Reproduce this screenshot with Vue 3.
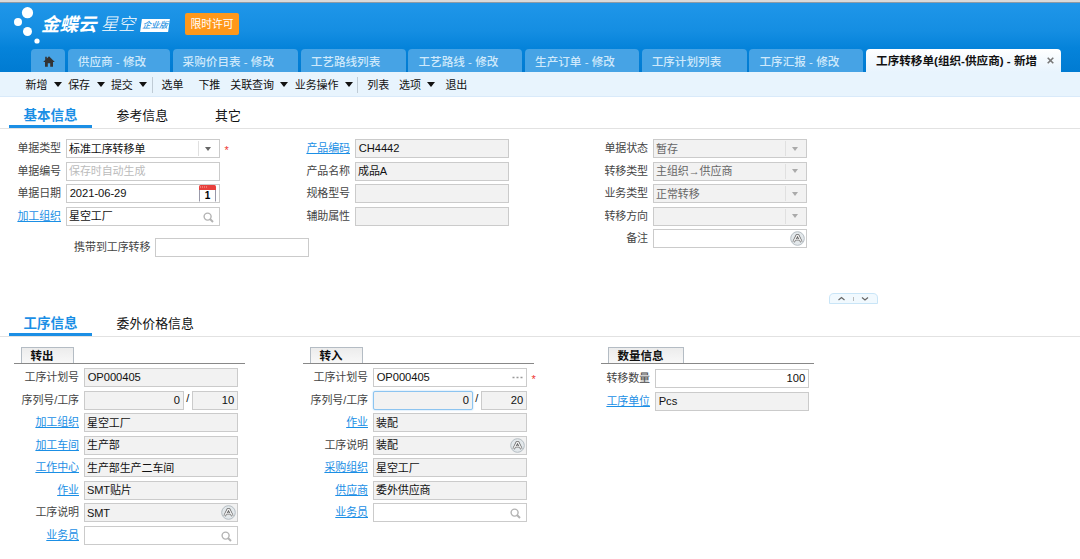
<!-- App.vue - Bill edit page: operation transfer (organization to supplier) -->
<script setup>
import { ref } from 'vue'

const windowTabs = [
  { title: '供应商 - 修改', size: 'w102' },
  { title: '采购价目表 - 修改', size: 'w125' },
  { title: '工艺路线列表', size: 'w105' },
  { title: '工艺路线 - 修改', size: 'w114' },
  { title: '生产订单 - 修改', size: 'w114' },
  { title: '工序计划列表', size: 'w105' },
  { title: '工序汇报 - 修改', size: 'w114' },
]

const tools = [
  { text: '新增', menu: true },
  { text: '保存', menu: true },
  { text: '提交', menu: true, end: true },
  { text: '选单', wide: true },
  { text: '下推' },
  { text: '关联查询', menu: true },
  { text: '业务操作', menu: true, end: true },
  { text: '列表' },
  { text: '选项', menu: true, wide: true },
  { text: '退出' },
]

const baseTabs = ['基本信息', '参考信息', '其它']
const detailTabs = ['工序信息', '委外价格信息']
const baseTab = ref(0)
const detailTab = ref(0)

// icon: drop | date | search | lang | more
const baseColumns = [
  {
    name: 'col-bill',
    fields: [
      { label: '单据类型', value: '标准工序转移单', icon: 'drop', required: true },
      { label: '单据编号', value: '保存时自动生成', hint: true },
      { label: '单据日期', value: '2021-06-29', latin: true, icon: 'date' },
      { label: '加工组织', value: '星空工厂', link: true, icon: 'search' },
    ],
  },
  {
    name: 'col-product',
    fields: [
      { label: '产品编码', value: 'CH4442', latin: true, link: true, locked: true },
      { label: '产品名称', value: '成品A', locked: true },
      { label: '规格型号', value: '', locked: true },
      { label: '辅助属性', value: '', locked: true },
    ],
  },
  {
    name: 'col-status',
    fields: [
      { label: '单据状态', value: '暂存', locked: true, dim: true, icon: 'drop' },
      { label: '转移类型', value: '主组织→供应商', locked: true, dim: true, icon: 'drop' },
      { label: '业务类型', value: '正常转移', locked: true, dim: true, icon: 'drop' },
      { label: '转移方向', value: '', locked: true, dim: true, icon: 'drop' },
      { label: '备注', value: '', icon: 'lang' },
    ],
  },
]

const groups = [
  {
    name: 'group-out',
    title: '转出',
    fields: [
      { label: '工序计划号', value: 'OP000405', latin: true, locked: true },
      { label: '序列号/工序', value: '0', second: '10', latin: true, locked: true },
      { label: '加工组织', value: '星空工厂', link: true, locked: true },
      { label: '加工车间', value: '生产部', link: true, locked: true },
      { label: '工作中心', value: '生产部生产二车间', link: true, locked: true },
      { label: '作业', value: 'SMT贴片', link: true, locked: true },
      { label: '工序说明', value: 'SMT', locked: true, icon: 'lang' },
      { label: '业务员', value: '', link: true, icon: 'search' },
    ],
  },
  {
    name: 'group-in',
    title: '转入',
    fields: [
      { label: '工序计划号', value: 'OP000405', latin: true, icon: 'more', required: true },
      { label: '序列号/工序', value: '0', second: '20', latin: true, locked: true, focus: true },
      { label: '作业', value: '装配', link: true, locked: true },
      { label: '工序说明', value: '装配', locked: true, icon: 'lang' },
      { label: '采购组织', value: '星空工厂', link: true, locked: true },
      { label: '供应商', value: '委外供应商', link: true, locked: true },
      { label: '业务员', value: '', link: true, icon: 'search' },
    ],
  },
  {
    name: 'group-qty',
    title: '数量信息',
    fields: [
      { label: '转移数量', value: '100', latin: true, right: true },
      { label: '工序单位', value: 'Pcs', latin: true, link: true, locked: true },
    ],
  },
]
</script>

<template>
  <div class="page">
    <div class="browser-edge"></div>

    <header class="header">
      <div class="brand">
        <svg class="dots" width="30" height="42" viewBox="0 0 30 42">
          <g fill="#fff">
            <circle cx="14.5" cy="9.7" r="5.6" />
            <circle cx="5" cy="19" r="4" />
            <circle cx="14.5" cy="28.5" r="4.5" />
            <circle cx="24" cy="38" r="2.6" />
          </g>
        </svg>
        <span class="brand-main">金蝶云</span>
        <span class="brand-sub">星空</span>
        <span class="edition"><span>企业版</span></span>
        <span class="license">限时许可</span>
      </div>

      <nav class="window-tabs">
        <div class="window-tab home">
          <svg width="12" height="11" viewBox="0 0 12 11">
            <path d="M6 0.2L11.8 6H10v4.8H7.2V7.2H4.8v3.6H2V6H0.2L2.2 4V0.8h1.6v1.6z" fill="#333" />
          </svg>
        </div>
        <div v-for="tab in windowTabs" :key="tab.title" class="window-tab" :class="tab.size">
          {{ tab.title }}
        </div>
        <div class="window-tab current">
          <span>工序转移单(组织-供应商) - 新增</span>
          <svg class="close" width="7" height="7" viewBox="0 0 7 7">
            <path d="M0.7 0.7l5.6 5.6M6.3 0.7L0.7 6.3" stroke="#777" stroke-width="1.6" />
          </svg>
        </div>
      </nav>
    </header>

    <div class="toolbar">
      <div
        v-for="tool in tools"
        :key="tool.text"
        class="tool"
        :class="{ menu: tool.menu, wide: tool.wide, end: tool.end }"
      >
        {{ tool.text }}<i v-if="tool.menu" class="caret"></i>
      </div>
    </div>

    <nav class="section-tabs">
      <div
        v-for="(tab, i) in baseTabs"
        :key="tab"
        class="section-tab"
        :class="{ active: baseTab === i }"
        @click="baseTab = i"
      >
        {{ tab }}
      </div>
    </nav>

    <section class="base-form">
      <div v-for="col in baseColumns" :key="col.name" class="column" :class="col.name">
        <div v-for="f in col.fields" :key="f.label" class="row">
          <span class="label" :class="{ link: f.link }">{{ f.label }}</span>
          <div class="field" :class="{ locked: f.locked, dim: f.dim, hint: f.hint, latin: f.latin }">
            <span class="value">{{ f.value }}</span>
            <span v-if="f.icon === 'drop'" class="drop"><i></i></span>
            <svg v-else-if="f.icon === 'date'" class="date" width="17" height="17" viewBox="0 0 17 17">
              <path d="M0.5 4v12.5M16.5 4v12.5" fill="none" stroke="#99a" />
              <path d="M0 5V1.5Q0 0 1.5 0h14Q17 0 17 1.5V5z" fill="#e8403c" />
              <path d="M1 2h8" stroke="#f9b0aa" stroke-dasharray="1 1" />
              <text x="8.5" y="14" text-anchor="middle" font-size="10" font-weight="700">1</text>
            </svg>
            <svg v-else-if="f.icon === 'search'" class="search" width="11" height="11" viewBox="0 0 11 11">
              <circle cx="4.6" cy="4.6" r="3.5" fill="none" stroke="#b3b3b3" stroke-width="1.4" />
              <path d="M7 7l3 3" stroke="#b3b3b3" stroke-width="1.9" />
            </svg>
            <svg v-else-if="f.icon === 'lang'" class="lang" width="15" height="15" viewBox="0 0 15 15">
              <circle cx="7.5" cy="7.5" r="6.8" fill="#e3e8eb" stroke="#b4bcc2" />
              <path d="M3.6 11L7 4.2h1L11.4 11M5.4 8.8h4.2" fill="none" stroke="#666" stroke-width="2.6" stroke-linejoin="round" />
              <path d="M3.6 10.8L7 4.4h1L11.4 10.8M5.4 8.8h4.2" fill="none" stroke="#f4f4f4" stroke-width="1.2" />
            </svg>
          </div>
          <span v-if="f.required" class="star">*</span>
        </div>
        <div v-if="col.name === 'col-bill'" class="row carry">
          <span class="label">携带到工序转移</span>
          <div class="field"></div>
        </div>
      </div>
    </section>

    <div class="splitter">
      <svg width="49" height="11" viewBox="0 0 49 11">
        <path d="M0.5 10.5V5Q0.5 0.5 5 0.5H44Q48.5 0.5 48.5 5V10.5z" fill="#f1f9fe" stroke="#c9e5f7" />
        <path d="M9.5 7l3-2.5 3 2.5M33 4.5l3 2.5 3-2.5" fill="none" stroke="#666" stroke-width="1.2" />
        <path d="M24.5 4v4" stroke="#bbb" />
      </svg>
    </div>

    <nav class="section-tabs">
      <div
        v-for="(tab, i) in detailTabs"
        :key="tab"
        class="section-tab"
        :class="{ active: detailTab === i }"
        @click="detailTab = i"
      >
        {{ tab }}
      </div>
    </nav>

    <section class="detail-form">
      <div v-for="g in groups" :key="g.name" class="group" :class="g.name">
        <div class="group-head"><span>{{ g.title }}</span></div>
        <div v-for="f in g.fields" :key="f.label" class="row">
          <span class="label" :class="{ link: f.link }">{{ f.label }}</span>
          <template v-if="f.second">
            <div class="field locked latin right serial" :class="{ focus: f.focus }">
              <span class="value">{{ f.value }}</span>
            </div>
            <span class="slash">/</span>
            <div class="field locked latin right process">
              <span class="value">{{ f.second }}</span>
            </div>
          </template>
          <div v-else class="field" :class="{ locked: f.locked, latin: f.latin, right: f.right }">
            <span class="value">{{ f.value }}</span>
            <svg v-if="f.icon === 'search'" class="search" width="11" height="11" viewBox="0 0 11 11">
              <circle cx="4.6" cy="4.6" r="3.5" fill="none" stroke="#b3b3b3" stroke-width="1.4" />
              <path d="M7 7l3 3" stroke="#b3b3b3" stroke-width="1.9" />
            </svg>
            <svg v-else-if="f.icon === 'lang'" class="lang" width="15" height="15" viewBox="0 0 15 15">
              <circle cx="7.5" cy="7.5" r="6.8" fill="#e3e8eb" stroke="#b4bcc2" />
              <path d="M3.6 11L7 4.2h1L11.4 11M5.4 8.8h4.2" fill="none" stroke="#666" stroke-width="2.6" stroke-linejoin="round" />
              <path d="M3.6 10.8L7 4.4h1L11.4 10.8M5.4 8.8h4.2" fill="none" stroke="#f4f4f4" stroke-width="1.2" />
            </svg>
            <svg v-else-if="f.icon === 'more'" class="more" width="11" height="3" viewBox="0 0 11 3">
              <path d="M0.5 1.5h2M4.5 1.5h2M8.5 1.5h2" stroke="#999" stroke-width="1.6" />
            </svg>
          </div>
          <span v-if="f.required" class="star">*</span>
        </div>
      </div>
    </section>
  </div>
</template>

<style>
body {
  margin: 0;
  background: #fff;
  overflow: hidden;
}
</style>

<style scoped>
.page {
  width: 1080px;
  height: 559px;
  overflow: hidden;
  background: #fff;
  color: #111;
  font-family: "Liberation Sans", "Noto Sans CJK SC", sans-serif;
  font-size: 11px;
  line-height: 16px;
}

.page * {
  box-sizing: border-box;
}

.browser-edge {
  height: 3px;
  background: linear-gradient(#d9d9d9 0 66%, #8d9aa5 66%);
}

/* ===== Header ===== */
.header {
  height: 69px;
  display: flex;
  flex-direction: column;
  justify-content: space-between;
  background: linear-gradient(#1f96e9 0%, #158ee2 40%, #0583da 65%, #007bd2 100%);
}

.brand {
  display: flex;
  align-items: flex-start;
  height: 42px;
  padding-left: 13px;
  color: #fff;
  white-space: nowrap;
}

.dots {
  flex: none;
}

.brand-main {
  width: 60px;
  margin: 10px 0 0 -2px;
  font-size: 18.5px;
  line-height: 24px;
  font-weight: 700;
  font-style: italic;
}

.brand-sub {
  width: 40px;
  margin-top: 10px;
  font-size: 17px;
  line-height: 24px;
  font-weight: 300;
  font-style: italic;
}

.edition {
  width: 28px;
  height: 13px;
  margin-top: 16px;
  background: #fff;
  color: #2994e2;
  font-size: 8.5px;
  line-height: 13px;
  font-weight: 500;
  font-style: italic;
  text-align: center;
  transform: skewX(-8deg);
}

.license {
  width: 54px;
  height: 22px;
  margin: 9.5px 0 0 16px;
  border-radius: 2px;
  background: #ff981a;
  font-size: 10.8px;
  line-height: 22px;
  text-align: center;
}

.window-tabs {
  display: flex;
  gap: 2.8px;
  height: 23px;
  padding-left: 31px;
}

.window-tab {
  flex: none;
  padding-left: 10px;
  border-radius: 4px 4px 0 0;
  background: #46a3e5;
  color: #cfe9fb;
  font-size: 11.6px;
  line-height: 26px;
  font-weight: 500;
  white-space: nowrap;
}

.window-tab.home {
  width: 34px;
  padding: 7px 0 0 12px;
  line-height: 0;
}

.w102 {
  width: 102px;
}

.w105 {
  width: 105px;
}

.w114 {
  width: 113.8px;
}

.w125 {
  width: 125.3px;
}

.window-tab.current {
  display: flex;
  align-items: center;
  justify-content: space-between;
  width: 195px;
  padding-right: 7.5px;
  background: linear-gradient(#fff, #e8f4fd);
  color: #111;
  font-weight: 700;
}

/* ===== Toolbar ===== */
.toolbar {
  display: flex;
  align-items: center;
  height: 25px;
  padding: 2px 0 0 25.5px;
  background: #e8f4fd;
  border-bottom: 1px solid #d9eafa;
}

.tool {
  display: flex;
  align-items: center;
  height: 16px;
  margin-right: 10px;
  white-space: nowrap;
  letter-spacing: -0.1px;
}

.tool.menu {
  margin-right: 6.3px;
}

.tool.wide {
  margin-right: 15px;
}

.tool.menu.wide {
  margin-right: 10px;
}

.tool.menu.end {
  margin-right: 8.8px;
  padding-right: 4.5px;
  border-right: 1px solid #bfcbd5;
}

.caret {
  margin: -2px 0 0 6.6px;
  border: 4px solid transparent;
  border-top: 5px solid #111;
  border-bottom: 0;
}

/* ===== Section tabs ===== */
.section-tabs {
  display: flex;
  gap: 22px;
  height: 32px;
  padding-left: 9px;
  border-bottom: 1px solid #e2e2e2;
}

.section-tab {
  height: 31px;
  padding: 0 2.5px;
  font-size: 12.9px;
  line-height: 38px;
  cursor: pointer;
}

.section-tab + .section-tab + .section-tab {
  margin-left: 20px;
}

.section-tab.active {
  width: 83px;
  padding: 0;
  border-bottom: 3px solid #1b8fe5;
  color: #1b8fe5;
  font-size: 13.5px;
  font-weight: 700;
  text-align: center;
}

/* ===== Fields ===== */
.base-form {
  display: flex;
  height: 164px;
  padding-top: 10px;
}

.column {
  flex: none;
}

.col-bill {
  width: 289px;
}

.col-product {
  width: 298px;
}

.column .label {
  width: 61px;
}

.row {
  display: flex;
  height: 22.5px;
}

.label {
  flex: none;
  margin-right: 5px;
  color: #444;
  line-height: 19px;
  text-align: right;
  white-space: nowrap;
  letter-spacing: -0.1px;
}

.label.link {
  color: #1b8fe5;
  text-decoration: underline;
}

.field {
  display: flex;
  flex: none;
  align-items: center;
  justify-content: space-between;
  width: 153.6px;
  height: 19px;
  padding-left: 2px;
  border: 1px solid #cbcbcb;
  background: #fff;
  letter-spacing: -0.1px;
}

.field.locked {
  background: #f2f2f2;
}

.field.dim {
  color: #666;
}

.field.hint {
  color: #bbb;
}

.field.latin {
  padding-left: 2.7px;
  font-size: 11.2px;
  letter-spacing: -0.05px;
}

.field.right {
  justify-content: flex-end;
  padding-right: 2.5px;
}

.field.serial {
  width: 99.5px;
}

.field.process {
  width: 45.6px;
}

.field.focus {
  border-color: #8cc4f0;
  border-radius: 2px;
  box-shadow: 0 0 2px #a5d2f5;
}

.slash {
  width: 8.5px;
  line-height: 15px;
  text-align: center;
}

.value {
  padding-top: 1px;
  line-height: 17px;
  white-space: nowrap;
}

.latin .value {
  padding-top: 0;
}

.drop {
  display: flex;
  align-items: center;
  justify-content: center;
  width: 20px;
  height: 15px;
  margin-right: 1px;
  border-left: 1px solid #e0e0e0;
}

.drop i {
  border: 3px solid transparent;
  border-top: 4px solid #666;
  border-bottom: 0;
}

.dim .drop i {
  border-top-color: #aaa;
}

.date {
  margin-right: 3px;
}

.search {
  margin: 2px 5px 0 0;
}

.lang {
  margin-right: 1px;
}

.more {
  margin-right: 3px;
}

.star {
  margin-left: 5px;
  color: #e33;
  font-size: 11px;
  line-height: 23px;
}

.carry {
  margin-top: 8.5px;
}

.col-bill .carry .label {
  width: 150.4px;
}

.splitter {
  height: 12px;
  padding-left: 829px;
  line-height: 0;
}

/* ===== Detail groups ===== */
.detail-form {
  display: flex;
  padding: 10px 0 0 14px;
}

.group {
  width: 231px;
  margin-right: 58px;
}

.group-in {
  margin-right: 67px;
}

.group-qty {
  width: 213px;
  margin-right: 0;
}

.group-head {
  display: flex;
  height: 17px;
  margin-bottom: 4px;
  padding-left: 6.5px;
  border-bottom: 1px solid #888;
}

.group-head span {
  height: 16px;
  padding: 0 19px 0 9px;
  border: 1px solid #b4bcc4;
  border-bottom: 0;
  background: linear-gradient(#ececec, #f8f8f8);
  font-size: 11.5px;
  font-weight: 700;
  line-height: 17px;
}

.group .label {
  width: 65px;
}

.group-qty .label {
  width: 49px;
}

.group-qty .group-head {
  margin-bottom: 5px;
}
</style>
